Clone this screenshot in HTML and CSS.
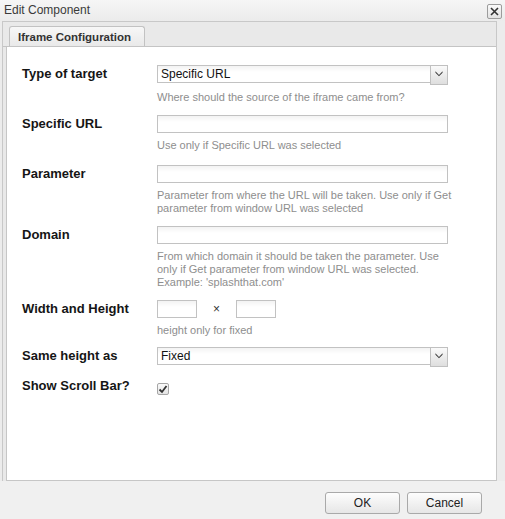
FILE: index.html
```html
<!DOCTYPE html>
<html>
<head>
<meta charset="utf-8">
<link rel="stylesheet" href="styles.css">
</head>
<body>
<div class="window">
  <div class="titlebar">
    <span class="title">Edit Component</span>
    <span class="close"><svg width="13" height="13" viewBox="0 0 13 13"><path d="M3 3 L10 10 M10 3 L3 10" stroke="#333" stroke-width="1.6" fill="none"/></svg></span>
  </div>
  <div class="panel">
    <div class="tabstrip">
      <div class="tab">Iframe Configuration</div>
    </div>
    <div class="tabbody">
      <div class="row">
        <div class="lbl">Type of target</div>
        <div class="fld">
          <div class="select">
            <span class="select-text">Specific URL</span>
            <span class="trigger"><svg width="18" height="20" viewBox="0 0 18 20"><path d="M5 7 L9 11 L13 7 L13 8.5 L9 12.5 L5 8.5 Z" fill="#3a3a3a"/></svg></span>
          </div>
          <div class="help">Where should the source of the iframe came from?</div>
        </div>
      </div>
      <div class="row wide">
        <div class="lbl">Specific URL</div>
        <div class="fld">
          <div class="input"></div>
          <div class="help">Use only if Specific URL was selected</div>
        </div>
      </div>
      <div class="row">
        <div class="lbl">Parameter</div>
        <div class="fld">
          <div class="input"></div>
          <div class="help">Parameter from where the URL will be taken. Use only if Get parameter from window URL was selected</div>
        </div>
      </div>
      <div class="row">
        <div class="lbl">Domain</div>
        <div class="fld">
          <div class="input"></div>
          <div class="help">From which domain it should be taken the parameter. Use only if Get parameter from window URL was selected. Example: 'splashthat.com'</div>
        </div>
      </div>
      <div class="row tight">
        <div class="lbl">Width and Height</div>
        <div class="fld">
          <div class="pair">
            <div class="input small"></div>
            <span class="times">×</span>
            <div class="input small"></div>
          </div>
          <div class="help">height only for fixed</div>
        </div>
      </div>
      <div class="row tight">
        <div class="lbl">Same height as</div>
        <div class="fld">
          <div class="select">
            <span class="select-text">Fixed</span>
            <span class="trigger"><svg width="18" height="20" viewBox="0 0 18 20"><path d="M5 7 L9 11 L13 7 L13 8.5 L9 12.5 L5 8.5 Z" fill="#3a3a3a"/></svg></span>
          </div>
        </div>
      </div>
      <div class="row">
        <div class="lbl">Show Scroll Bar?</div>
        <div class="fld">
          <span class="checkbox"><svg width="10" height="10" viewBox="0 0 10 10"><path d="M1.5 5.5 L4 8 L8.5 2" stroke="#333" stroke-width="1.8" fill="none"/></svg></span>
        </div>
      </div>
    </div>
  </div>
  <div class="footer">
    <button class="btn">OK</button>
    <button class="btn">Cancel</button>
  </div>
</div>
</body>
</html>
```
FILE: styles.css
```css
html, body {
  margin: 0;
  padding: 0;
}
body {
  width: 505px;
  height: 519px;
  overflow: hidden;
  background: #ececec;
  font-family: "Liberation Sans", Arial, sans-serif;
}
.window {
  display: flex;
  flex-direction: column;
  height: 519px;
}
.titlebar {
  height: 21px;
  flex: none;
  display: flex;
  align-items: center;
  justify-content: space-between;
  padding: 0 3px 0 4px;
  background: linear-gradient(#f6f6f6, #ebebeb);
}
.title {
  font-size: 12px;
  color: #3a3a3a;
  padding-bottom: 1px;
}
.close {
  width: 13px;
  height: 13px;
  border: 1px solid #9c9c9c;
  border-radius: 2px;
  background: linear-gradient(#fafafa, #e2e2e2);
  display: flex;
  margin-top: 1px;
}
.panel {
  flex: none;
  height: 459px;
  margin: 0 8px 0 2px;
  border: 1px solid #c8c8c8;
  border-bottom: none;
  background: #e9e9e9;
  display: flex;
  flex-direction: column;
}
.tabstrip {
  height: 21px;
  padding: 3px 0 0 6px;
  border-bottom: 1px solid #c4c4c4;
  display: flex;
  align-items: flex-end;
}
.tab {
  height: 20px;
  width: 136px;
  border: 1px solid #c2c2c2;
  border-bottom: none;
  border-radius: 3px 3px 0 0;
  background: linear-gradient(#f7f7f7, #e9e9e9);
  font-size: 11.5px;
  font-weight: bold;
  color: #333;
  padding-left: 8px;
  line-height: 21px;
  box-sizing: border-box;
}
.tabbody {
  flex: 1;
  margin-left: 3px;
  border-left: 1px solid #c6c6c6;
  border-bottom: 1px solid #c6c6c6;
  background: #fff;
  padding: 18px 0 0 15px;
}
.row {
  display: grid;
  grid-template-columns: 135px 300px;
  margin-bottom: 11px;
}
.row.wide {
  margin-bottom: 13px;
}
.row.tight {
  margin-bottom: 10px;
}
.lbl {
  font-size: 13px;
  font-weight: bold;
  color: #151515;
  line-height: 18px;
}
.fld {
  display: flex;
  flex-direction: column;
}
.input {
  width: 291px;
  height: 18px;
  box-sizing: border-box;
  border: 1px solid #c2c2c2;
  background: linear-gradient(#f3f3f3, #fff 6px);
}
.input.small {
  width: 40px;
}
.pair {
  display: flex;
  align-items: center;
}
.times {
  width: 39px;
  text-align: center;
  font-size: 12px;
  color: #333;
}
.select {
  width: 291px;
  display: flex;
  align-items: flex-start;
}
.select-text {
  flex: 1;
  height: 18px;
  box-sizing: border-box;
  border: 1px solid #c2c2c2;
  border-right: none;
  background: linear-gradient(#f3f3f3, #fff 6px);
  font-size: 12px;
  line-height: 16px;
  padding-left: 3px;
  color: #111;
}
.trigger {
  width: 18px;
  height: 20px;
  box-sizing: border-box;
  border: 1px solid #c0c0c0;
  background: linear-gradient(#fafafa, #dedede);
  display: flex;
  align-items: center;
  justify-content: center;
}
.trigger svg {
  margin-top: -2px;
}
.help {
  margin-top: 6px;
  font-size: 11px;
  line-height: 13px;
  color: #8e8e8e;
  width: 298px;
}
.checkbox {
  margin-top: 6px;
  width: 12px;
  height: 12px;
  box-sizing: border-box;
  border: 1px solid #a6a6a6;
  border-radius: 2px;
  background: linear-gradient(#fafafa, #e4e4e4);
  display: flex;
  align-items: center;
  justify-content: center;
}
.footer {
  flex: 1;
  display: flex;
  justify-content: flex-end;
  align-items: flex-start;
  gap: 7px;
  padding: 11px 23px 0 0;
  background: #f0f0f0;
}
.btn {
  width: 75px;
  height: 22px;
  border: 1px solid #a9a9a9;
  border-radius: 3px;
  background: linear-gradient(#fdfdfd, #e6e6e6);
  font-family: "Liberation Sans", Arial, sans-serif;
  font-size: 12px;
  color: #222;
  padding: 0;
}
```
